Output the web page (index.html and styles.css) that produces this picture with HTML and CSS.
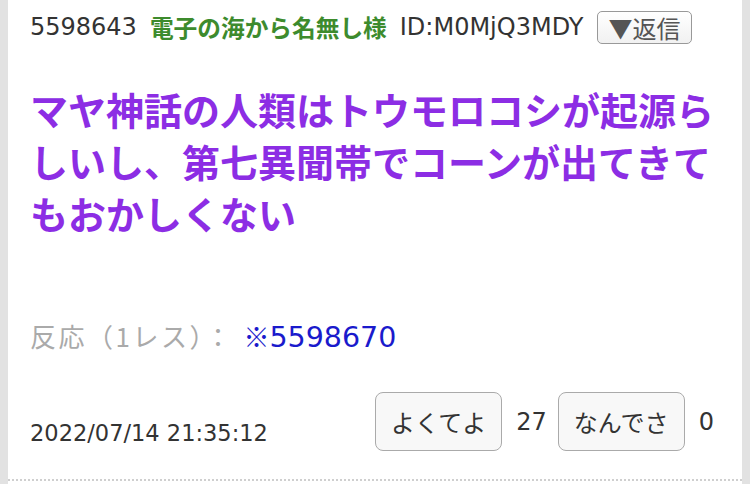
FILE: index.html
```html
<!DOCTYPE html>
<html lang="ja">
<head>
    <meta charset="UTF-8">
    <meta name="viewport" content="width=device-width, initial-scale=1.0">
    <title>レス 5598643</title>
    <link rel="stylesheet" href="styles.css">
</head>
<body>

<div class="thread">
    <div class="post">
        <div class="post-head">
            <span class="post-no">5598643</span>
            <span class="post-name">電子の海から名無し様</span>
            <span class="post-id">ID:M0MjQ3MDY</span>
            <button class="reply-btn">▼返信</button>
        </div>

        <div class="post-body">マヤ神話の人類はトウモロコシが起源らしいし、第七異聞帯でコーンが出てきてもおかしくない</div>

        <div class="post-reacts">反応（1レス）：<a class="anchor" href="#5598670"><span class="anchor-mark">※</span>5598670</a></div>

        <div class="post-foot">
            <span class="post-date">2022/07/14 21:35:12</span>
            <div class="votes">
                <button class="vote-btn">よくてよ</button>
                <span class="vote-count">27</span>
                <button class="vote-btn">なんでさ</button>
                <span class="vote-count">0</span>
            </div>
        </div>
    </div>
</div>

</body>
</html>
```

FILE: styles.css
```css
body {
    margin: 0;
    background-color: #e2e2e2;
    font-family: "DejaVu Sans", "Noto Sans CJK JP", sans-serif;
    color: #333;
}

.thread {
    margin: 0 8px;
    background-color: #fff;
    height: 100vh;
}

.post {
    padding: 10px 20px 28px 22px;
    border-bottom: 2px dotted #cfcfcf;
}

.post-head {
    display: flex;
    align-items: center;
    gap: 13px;
    font-size: 22px;
    line-height: 34px;
}

.post-no {
    font-size: 24px;
    color: #333;
}

.post-name {
    font-family: "Noto Sans CJK JP", sans-serif;
    font-size: 23.7px;
    color: #3d8b2d;
    font-weight: bold;
}

.post-id {
    font-size: 24px;
    color: #333;
}

.reply-btn {
    font-family: "Noto Sans CJK JP", sans-serif;
    font-size: 24px;
    line-height: 29px;
    color: #555;
    background: linear-gradient(#fff, #f1f1f1);
    border: 1.5px solid #999;
    border-radius: 5px;
    padding: 1px 11px 1px 10px;
    margin-left: 1px;
}

.post-body {
    font-family: "Noto Sans CJK JP", sans-serif;
    margin-top: 39px;
    font-size: 38px;
    line-height: 52px;
    font-weight: bold;
    color: #8c2de4;
}

.post-reacts {
    margin-top: 79px;
    font-family: "Noto Sans CJK JP", sans-serif;
    font-size: 26px;
    line-height: 36px;
    letter-spacing: 2.5px;
    color: #aaa;
}

.anchor {
    font-family: "DejaVu Sans", sans-serif;
    font-size: 28.5px;
    letter-spacing: 0;
    color: #1a1acc;
    text-decoration: none;
    margin-left: 10px;
}

.anchor-mark {
    font-family: "Noto Sans CJK JP", sans-serif;
    font-size: 26px;
}

.post-foot {
    display: flex;
    justify-content: space-between;
    align-items: flex-end;
    margin-top: 36px;
}

.post-date {
    font-size: 22.5px;
    line-height: 30px;
    margin-bottom: 3px;
}

.votes {
    display: flex;
    align-items: center;
    margin-right: 8px;
}

.vote-btn {
    font-family: "Noto Sans CJK JP", sans-serif;
    font-size: 24px;
    color: #333;
    width: 127px;
    height: 59px;
    background-color: #f8f8f8;
    border: 1.5px solid #aaa;
    border-radius: 8px;
}

.vote-count {
    font-size: 24px;
    margin: 0 11px 0 14px;
}

.vote-count:last-child {
    margin-right: 0;
}
```
